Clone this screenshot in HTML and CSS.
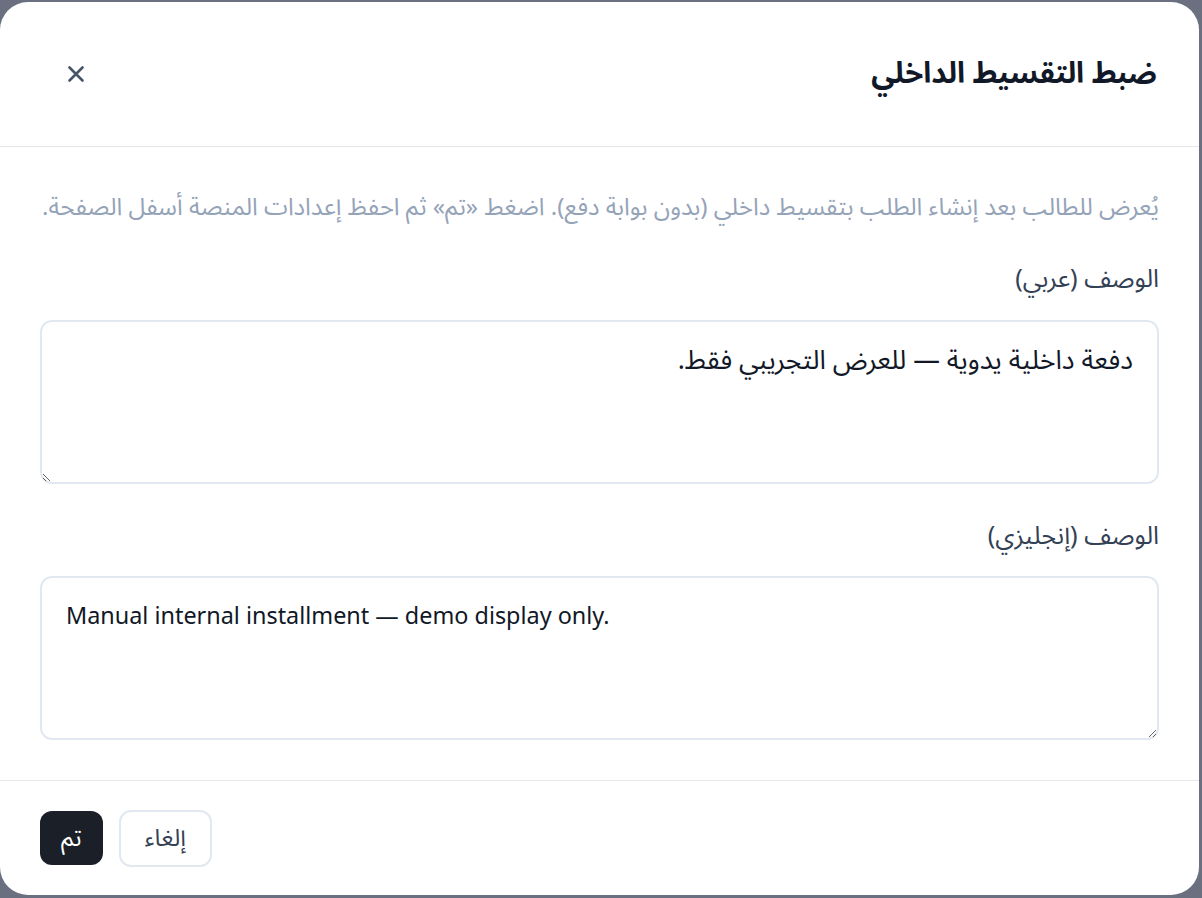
FILE: index.html
```html
<!DOCTYPE html>
<html lang="ar" dir="rtl">
<head>
<meta charset="UTF-8">
<meta name="viewport" content="width=device-width, initial-scale=1.0">
<title>ضبط التقسيط الداخلي</title>
<link rel="stylesheet" href="styles.css">
</head>
<body>
	<div class="modal">
		<div class="modal-header">
			<h2 class="modal-title">ضبط التقسيط الداخلي</h2>
			<button class="close-btn" aria-label="إغلاق">
				<svg width="20" height="20" viewBox="0 0 20 20" fill="none" stroke="currentColor" stroke-width="2.6" stroke-linecap="round">
					<path d="M3.5 3.5 L16.5 16.5 M16.5 3.5 L3.5 16.5"/>
				</svg>
			</button>
		</div>

		<div class="modal-body">
			<p class="hint">يُعرض للطالب بعد إنشاء الطلب بتقسيط داخلي (بدون بوابة دفع). اضغط «تم» ثم احفظ إعدادات المنصة أسفل الصفحة.</p>

			<label class="field-label" for="desc-ar">الوصف (عربي)</label>
			<textarea id="desc-ar" class="field" dir="rtl">دفعة داخلية يدوية — للعرض التجريبي فقط.</textarea>

			<label class="field-label second" for="desc-en">الوصف (إنجليزي)</label>
			<textarea id="desc-en" class="field field-en" dir="ltr">Manual internal installment — demo display only.</textarea>
		</div>

		<div class="modal-footer">
			<button class="btn btn-cancel">إلغاء</button>
			<button class="btn btn-done">تم</button>
		</div>
	</div>
</body>
</html>
```

FILE: styles.css
```css
body {
	margin: 0;
	background: #6b7080;
	font-family: "Noto Sans Arabic", "Noto Sans", "DejaVu Sans", sans-serif;
}

.modal {
	width: 1199px;
	height: 893px;
	margin: 2px 3px 0 0;
	background: #fff;
	border-radius: 28px;
	display: flex;
	flex-direction: column;
	overflow: hidden;
}

/* رأس النافذة */
.modal-header {
	height: 144px;
	flex-shrink: 0;
	display: flex;
	align-items: center;
	justify-content: space-between;
	padding: 0 42px 0 56px;
	border-bottom: 1px solid #e5e7eb;
}

.modal-title {
	margin: 0;
	font-size: 29.4px;
	line-height: 40px;
	font-weight: 700;
	color: #111827;
}

.close-btn {
	width: 40px;
	height: 40px;
	border: none;
	background: none;
	padding: 0;
	color: #475569;
	display: flex;
	align-items: center;
	justify-content: center;
	cursor: pointer;
}

/* المحتوى */
.modal-body {
	flex: 1;
	display: flex;
	flex-direction: column;
	padding: 45px 40px 40px 40px;
	border-bottom: 1px solid #e5e7eb;
}

.hint {
	margin: 0 0 38px 0;
	font-size: 24.1px;
	line-height: 32px;
	color: #94a3b8;
}

.field-label {
	font-size: 25.2px;
	line-height: 34px;
	color: #334155;
	margin-bottom: 24px;
}

.field-label.second {
	margin-top: 35px;
	margin-bottom: 23px;
}

.field {
	height: 164px;
	box-sizing: border-box;
	border: 2px solid #e2e8f0;
	border-radius: 12px;
	padding: 22px 24px;
	font-family: inherit;
	font-size: 26.7px;
	line-height: 34px;
	color: #111827;
	resize: vertical;
	outline: none;
}

.field-en {
	font-size: 23.4px;
}

/* الأزرار */
.modal-footer {
	flex: 1;
	display: flex;
	align-items: center;
	justify-content: flex-end;
	gap: 16px;
	padding: 0 40px;
}

.btn {
	font-family: inherit;
	font-size: 24px;
	border-radius: 12px;
	cursor: pointer;
}

.btn-cancel {
	height: 57px;
	padding: 0 24px;
	background: #fff;
	border: 2px solid #e2e8f0;
	color: #334155;
}

.btn-done {
	height: 54px;
	padding: 0 21px;
	background: #1b1f27;
	border: none;
	color: #fff;
}
```
